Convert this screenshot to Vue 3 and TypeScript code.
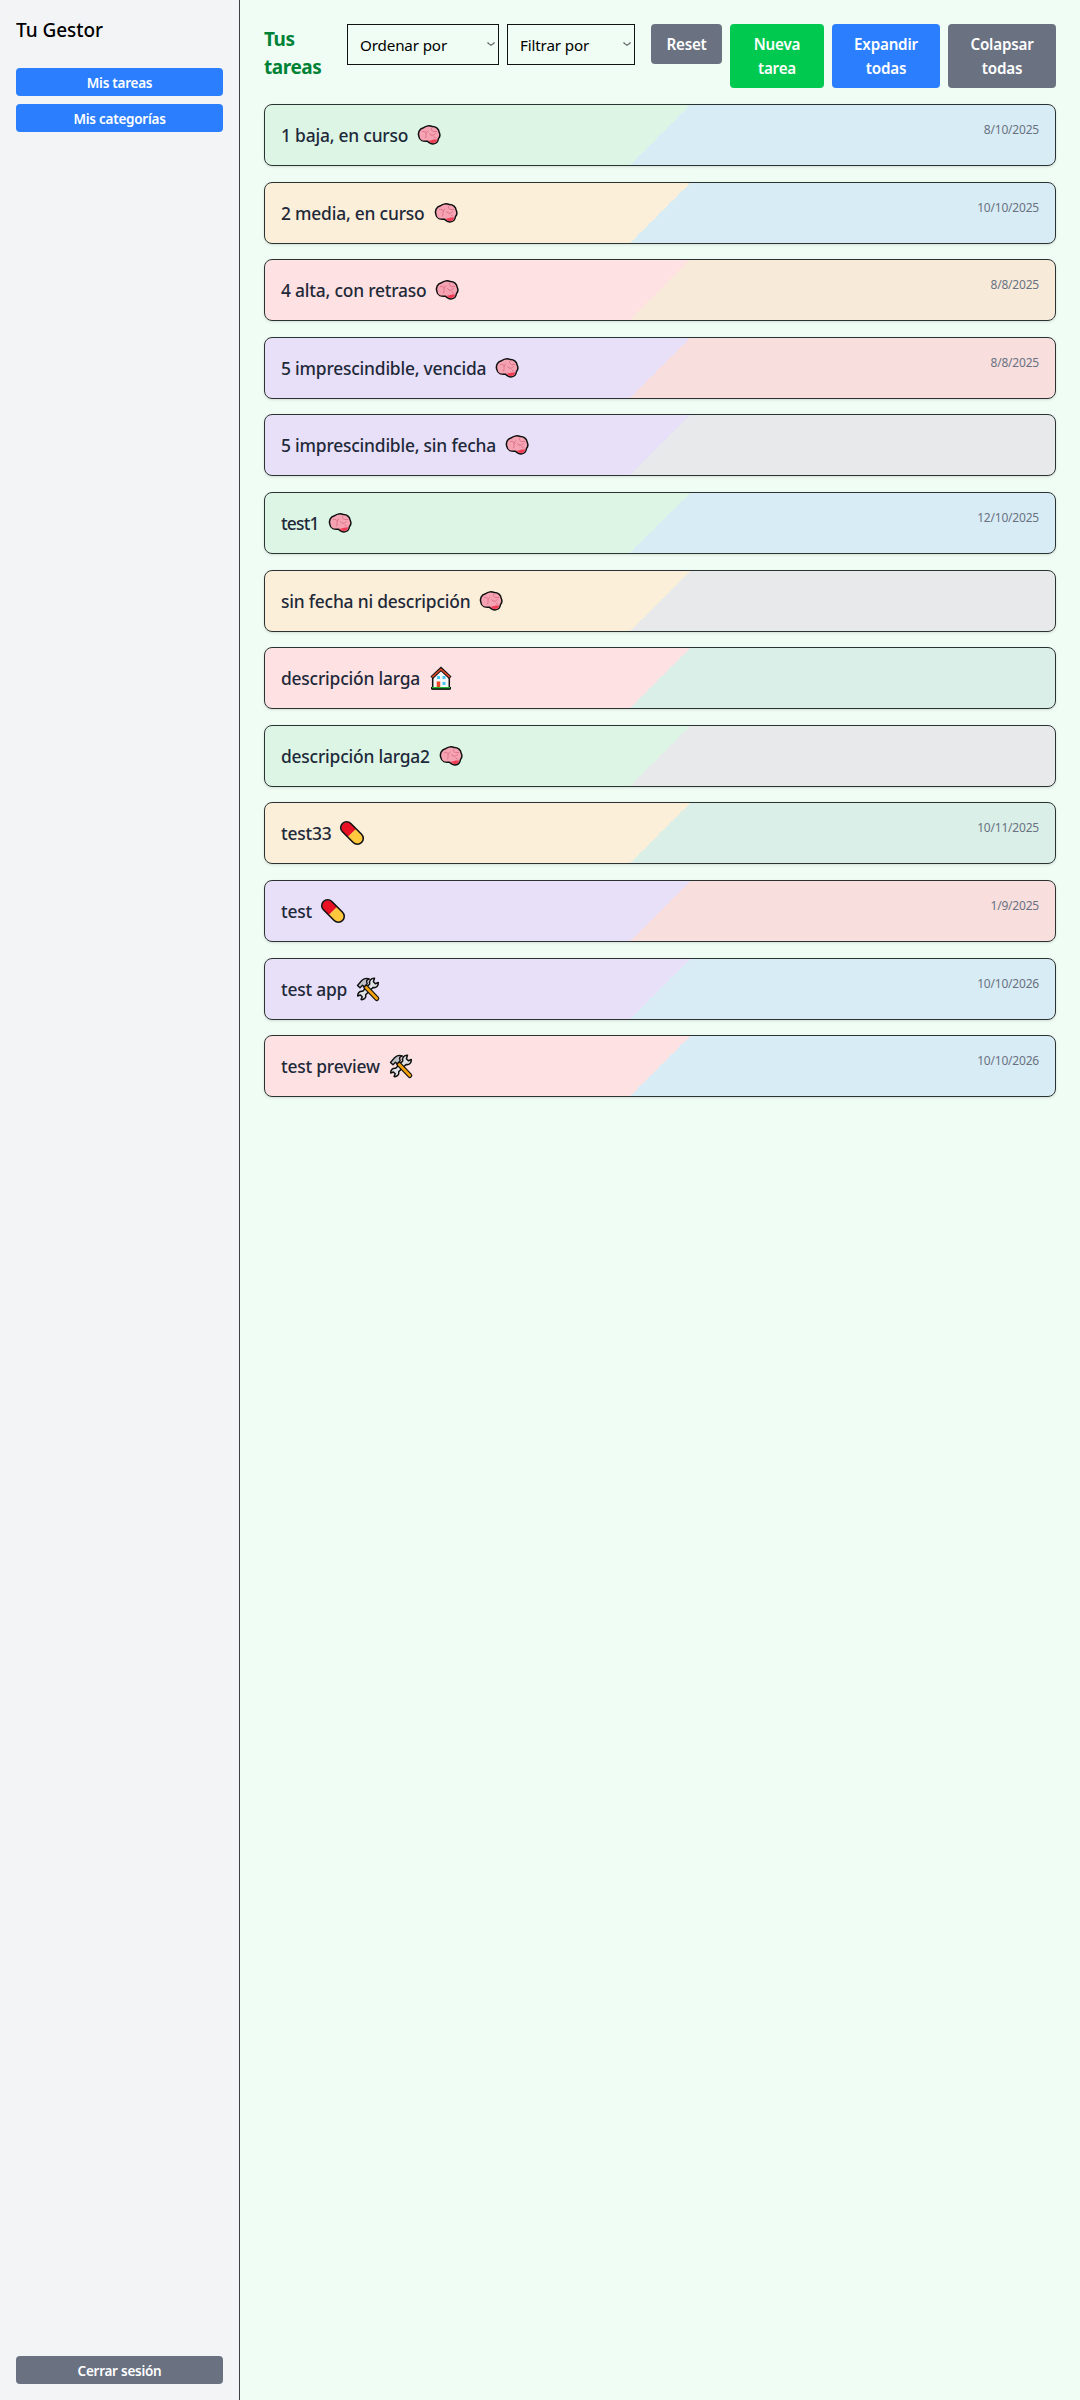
<script setup lang="ts">
type Icon = 'brain' | 'house' | 'pill' | 'tools'
interface Task { title: string; icon: Icon; priority: string; status: string; date?: string; tight?: boolean }

const priorities: Record<string, string> = {
  baja: '#ddf5e5', media: '#fcefda', alta: '#fee1e2', imprescindible: '#e8dff8',
}
const statuses: Record<string, string> = {
  curso: '#d8ecf5', retraso: '#f7ead9', vencida: '#f8dedd', sinFecha: '#e8e9eb', completada: '#daefe7',
}
const tasks: Task[] = [
  { title: '1 baja, en curso', icon: 'brain', priority: 'baja', status: 'curso', date: '8/10/2025' },
  { title: '2 media, en curso', icon: 'brain', priority: 'media', status: 'curso', date: '10/10/2025' },
  { title: '4 alta, con retraso', icon: 'brain', priority: 'alta', status: 'retraso', date: '8/8/2025' },
  { title: '5 imprescindible, vencida', icon: 'brain', priority: 'imprescindible', status: 'vencida', date: '8/8/2025' },
  { title: '5 imprescindible, sin fecha', icon: 'brain', priority: 'imprescindible', status: 'sinFecha' },
  { title: 'test1', icon: 'brain', priority: 'baja', status: 'curso', date: '12/10/2025', tight: true },
  { title: 'sin fecha ni descripción', icon: 'brain', priority: 'media', status: 'sinFecha' },
  { title: 'descripción larga', icon: 'house', priority: 'alta', status: 'completada' },
  { title: 'descripción larga2', icon: 'brain', priority: 'baja', status: 'sinFecha' },
  { title: 'test33', icon: 'pill', priority: 'media', status: 'completada', date: '10/11/2025' },
  { title: 'test', icon: 'pill', priority: 'imprescindible', status: 'vencida', date: '1/9/2025' },
  { title: 'test app', icon: 'tools', priority: 'imprescindible', status: 'curso', date: '10/10/2026' },
  { title: 'test preview', icon: 'tools', priority: 'alta', status: 'curso', date: '10/10/2026' },
]
const fill = (t: Task) => ({
  backgroundImage: `linear-gradient(135deg, ${priorities[t.priority]} 50%, ${statuses[t.status]} 50%)`,
})
</script>

<template>
  <div class="app">
    <aside class="sidebar">
      <div class="brand">Tu Gestor</div>
      <nav class="nav">
        <button class="side-btn blue">Mis tareas</button>
        <button class="side-btn blue">Mis categorías</button>
      </nav>
      <button class="side-btn gray">Cerrar sesión</button>
    </aside>
    <main class="main">
      <header class="header">
        <h1>Tus tareas</h1>
        <div class="filters">
          <div class="select order"><span>Ordenar por</span><svg viewBox="0 0 8 6"><path d="M1 1v1.2L4 4.3 7 2.2V1" /></svg></div>
          <div class="select filter"><span>Filtrar por</span><svg viewBox="0 0 8 6"><path d="M1 1v1.2L4 4.3 7 2.2V1" /></svg></div>
        </div>
        <div class="actions">
          <button class="btn gray reset">Reset</button>
          <button class="btn green">Nueva tarea</button>
          <button class="btn blue wide">Expandir todas</button>
          <button class="btn gray wide">Colapsar todas</button>
        </div>
      </header>
      <section class="list">
        <article v-for="t in tasks" :key="t.title" class="card" :style="fill(t)">
          <div class="title">
            <span :class="{ tight: t.tight }">{{ t.title }}</span>
            <svg class="icon" viewBox="0 0 24 24">
              <g v-if="t.icon === 'brain'" stroke-linejoin="round" stroke-linecap="round">
                <path d="M2 14C.3 10 2.5 5.6 6.5 4.7 9 2.5 13 2.4 15.5 3.600c3.500 0 6.300 2.400 6.600 5.400 1.300 2.500.700 5-.600 6.500-.400 3-2.700 5.300-5.500 5.500-2.600.100-4.200-1.800-5.800-2.800C6.500 18.700 2.500 17.500 2 14Z" fill="#f5a3b3" stroke="#111" stroke-width="1.500" />
                <path d="M11.500 17.700c2.300-.300 3.800-.700 5.500-1.200h3.300c-.600 2.300-2.200 3.600-4.300 3.600-1.900 0-3.200-1.200-4.500-2.400Z" fill="#ee3d54" />
                <path d="M5.500 8.500c2-.500 3 .500 4 1.500M8.500 15c1-1.500.500-3 .500-5l2-2M14.500 5.500c-.500 1.500.500 2.500 2 3h3M14 12c1.500.800 3.500 0 4.500-1.500M14 12l-1.500-1.500M18.500 15l-1.500-1" fill="none" stroke="#e0748c" stroke-width="1" />
              </g>
              <g v-else-if="t.icon === 'house'">
                <path d="M3.700 10.500 12 2.500l8.300 8V23H3.700Z" fill="#f6f6f6" stroke="#111" stroke-width="1.500" />
                <path d="M2.700 11.800 12 3l9.300 8.800" fill="none" stroke="#111" stroke-width="3.600" />
                <path d="M3.200 11.100 12 3.300l8.800 7.800" fill="none" stroke="#e64a2e" stroke-width="1.500" />
                <path d="M8 10h3v3H8zM13.500 10h3v3h-3zM13.500 16h3v3h-3z" fill="#45c8f1" />
                <path d="M7.700 15.500h3.500v6H7.700z" fill="#ef4527" />
                <path d="M2 21h20v2.500H2z" fill="#111" /><path d="M3 21h18v1.300H3z" fill="#20b52f" />
              </g>
              <g v-else-if="t.icon === 'pill'" transform="rotate(45 12 12)">
                <path d="M12 6.200H4.800a5.800 5.800 0 0 0 0 11.600H12Z" fill="#e81224" />
                <path d="M12 6.200h7.200a5.800 5.800 0 0 1 0 11.600H12Z" fill="#ffc83d" />
                <rect x="-1.500" y="6.100" width="27" height="11.800" rx="5.900" fill="none" stroke="#111" stroke-width="1.600" />
              </g>
              <g v-else stroke-linejoin="round" stroke-linecap="round">
                <path d="M18.500 1.200c-3.300-.200-5.700 2.600-4.800 5.800l-7 7.300c-2.900-.500-5.300 1.700-5 4.700l2.700-1 1.800 1.800-1.100 2.800c3.200.300 5.300-2 4.600-4.900l7.300-7.200c3.200.700 5.700-1.900 5.300-5l-2.900 1.300-2-2Z" fill="#e1e3e6" stroke="#111" stroke-width="1.500" />
                <path d="m9.500 9.800 11.300 11.700" stroke="#111" stroke-width="5" />
                <path d="m10 10.300 10.800 11.200" stroke="#f4a20b" stroke-width="2.700" />
                <path d="m1.500 8.500 4.300-5C8 1.500 10.700.800 13.300 2c-2 .400-2.700 1.200-2.700 2.500l.600 2.300L8.300 9.800 6.500 8.300 4 10.800Z" fill="#bfc3c7" stroke="#111" stroke-width="1.400" />
              </g>
            </svg>
          </div>
          <time v-if="t.date">{{ t.date }}</time>
        </article>
      </section>
    </main>
  </div>
</template>

<style>
body { margin: 0; }
</style>
<style scoped>
* { box-sizing: border-box; }
.app { display: flex; height: 2400px; font-family: "Noto Sans", "Open Sans", sans-serif; background: #f0fdf4; }
.sidebar { width: 240px; flex: none; display: flex; flex-direction: column; padding: 16px; background: #f3f4f6; border-right: 1px solid #3c4043; }
.brand { height: 28px; line-height: 29px; font-size: 19px; font-weight: 500; letter-spacing: -.05px; color: #000; margin-bottom: 24px; white-space: nowrap; }
.nav { display: flex; flex-direction: column; gap: 8px; margin-bottom: auto; }
button { border: 0; color: #fff; font-family: inherit; font-weight: 600; text-align: center; border-radius: 4px; }
.side-btn { width: 100%; height: 28px; padding: 2px 8px 0; font-size: 13.5px; line-height: 20px; letter-spacing: -.25px; }
.blue { background: #2b7fff; }
.gray { background: #6a7282; }
.green { background: #00c950; }
.main { flex: 1; padding: 24px; }
.header { display: flex; align-items: flex-start; height: 64px; margin-bottom: 16px; }
h1 { width: 60px; margin: 0; padding-top: 1px; font-size: 19px; line-height: 28px; font-weight: 700; color: #008236; letter-spacing: -.45px; }
.filters { display: flex; gap: 8px; margin-left: 23px; }
.select { height: 41px; display: flex; align-items: center; justify-content: space-between; border: 1px solid #111; padding: 0 3px 0 12px; font-size: 15.2px; color: #000; white-space: nowrap; letter-spacing: -.15px; }
.select svg { width: 8px; height: 6px; margin-bottom: 2px; fill: none; stroke: #666; stroke-width: 1.1; }
.order { width: 152px; }
.filter { width: 128px; }
.actions { display: flex; align-items: flex-start; gap: 8px; margin-left: auto; }
.btn { width: 94px; padding: 8px 16px; font-size: 15.2px; line-height: 24px; letter-spacing: -.2px; }
.reset { width: 71px; padding: 8px 12px; }
.wide { width: 108px; }
.list { display: flex; flex-direction: column; gap: 15.6px; }
.card { height: 62px; flex: none; display: flex; justify-content: space-between; align-items: flex-start; padding: 16px; border: 1px solid #2b3232; border-radius: 8px; background-origin: border-box; box-shadow: 0 1px 3px rgba(0,0,0,.1), 0 1px 2px -1px rgba(0,0,0,.1); }
.title { display: flex; align-items: center; height: 28px; font-size: 17.4px; line-height: 28px; font-weight: 500; color: #1e2939; letter-spacing: -.2px; white-space: nowrap; }
.tight { letter-spacing: -.8px; }
.icon { width: 24px; height: 24px; margin-left: 9px; overflow: visible; }
time { padding-top: 1px; font-size: 12px; line-height: 16px; color: #6a7282; letter-spacing: -.2px; }
</style>
